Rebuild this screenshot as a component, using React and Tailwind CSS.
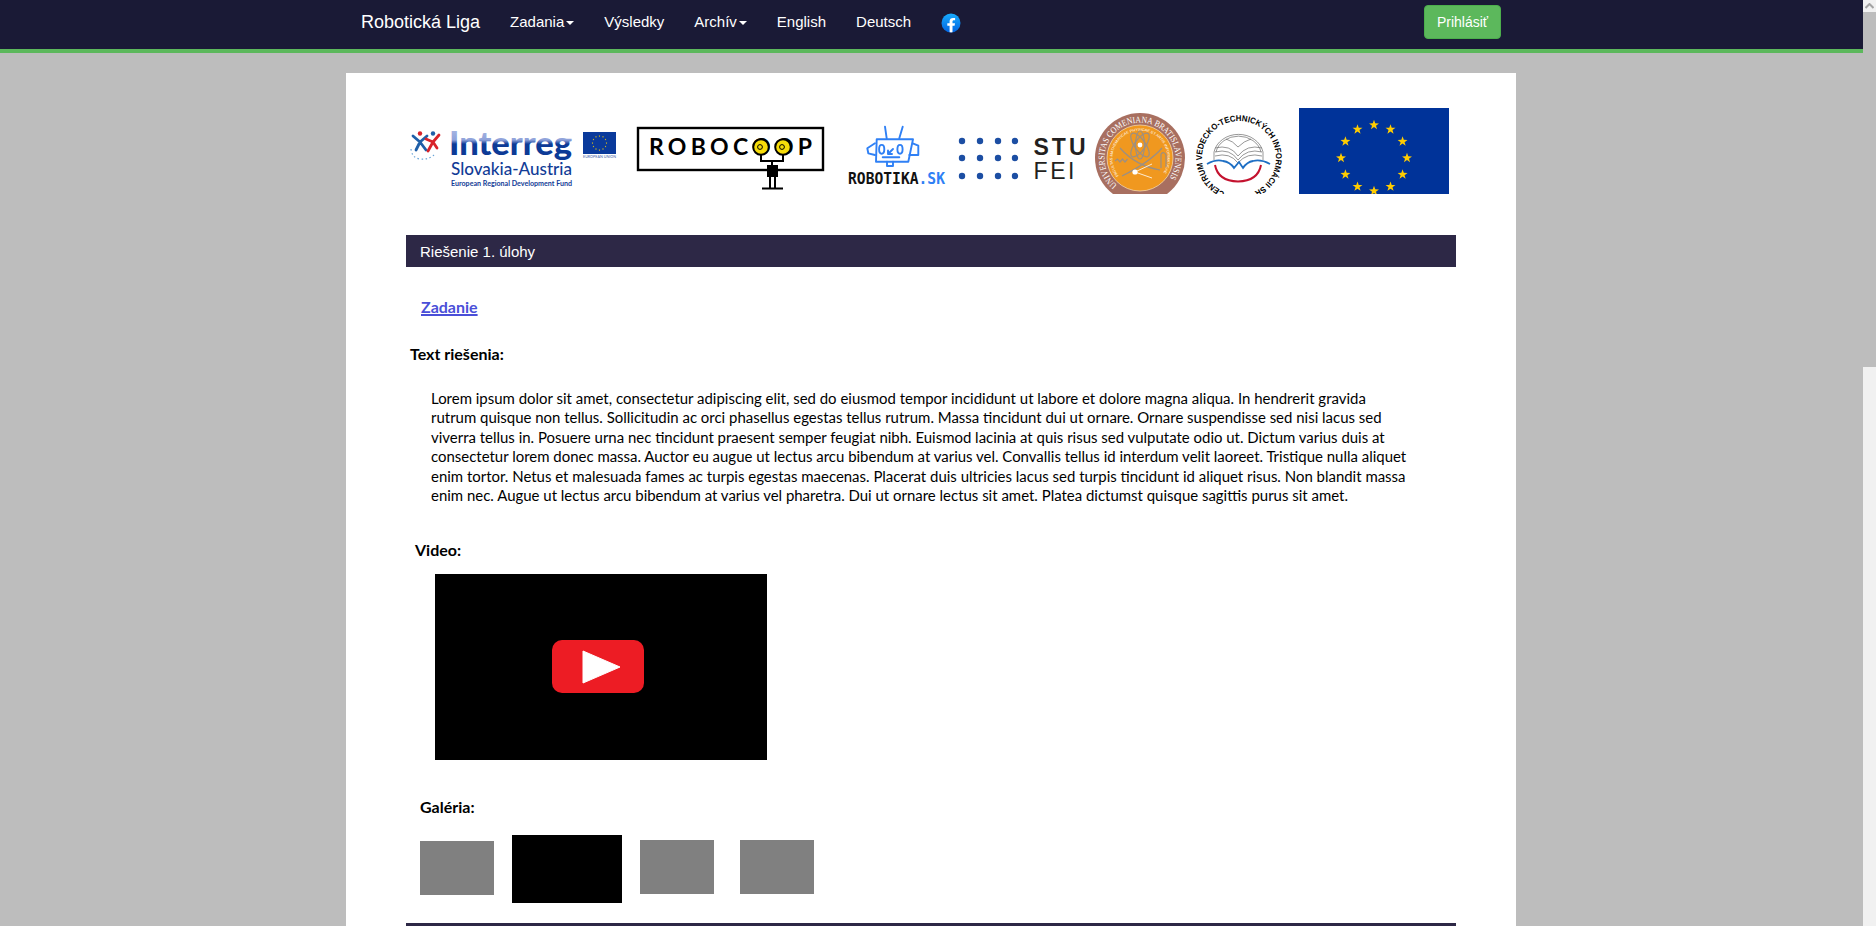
import React from "react";

function starPoints(cx, cy, r) {
  const pts = [];
  for (let i = 0; i < 10; i++) {
    const rad = i % 2 === 0 ? r : r * 0.4;
    const a = -Math.PI / 2 + (i * Math.PI) / 5;
    pts.push(`${(cx + rad * Math.cos(a)).toFixed(2)},${(cy + rad * Math.sin(a)).toFixed(2)}`);
  }
  return pts.join(" ");
}

function Stars({ cx, cy, R, r, fill }) {
  return (
    <>
      {Array.from({ length: 12 }).map((_, i) => {
        const a = (i * Math.PI) / 6;
        return <polygon key={i} points={starPoints(cx + R * Math.sin(a), cy - R * Math.cos(a), r)} fill={fill} />;
      })}
    </>
  );
}

function InterregLogo() {
  return (
    <svg width="224" height="86" viewBox="0 0 224 86" className="shrink-0">
      <defs>
        <linearGradient id="intg" x1="0" y1="0" x2="0" y2="1">
          <stop offset="0" stopColor="#b9c4e8" />
          <stop offset="0.45" stopColor="#8fa2da" />
          <stop offset="0.55" stopColor="#0d3a96" />
          <stop offset="1" stopColor="#0d3a96" />
        </linearGradient>
      </defs>
      <g fill="none" strokeWidth="2.8" strokeLinecap="round" strokeLinejoin="round">
        <path d="M7 28 L14 34 L21 28 M14 34 L10 42 M14 34 L20 42" stroke="#1f5fa8" />
        <path d="M20 31 L27 34 L33 27 M27 34 L22 43 M27 34 L31 40" stroke="#d8232a" />
      </g>
      <circle cx="14" cy="25.5" r="2.2" fill="#d8232a" />
      <circle cx="27" cy="25.5" r="2.2" fill="#1f5fa8" />
      <path d="M5 41 Q6 50 14 51 Q22 52 28 47" fill="none" stroke="#6aa5d8" strokeWidth="1.2" strokeDasharray="1.5 2.5" />
      <text x="43" y="47" fontFamily="Lato, sans-serif" fontWeight="900" fontSize="33" textLength="123" lengthAdjust="spacingAndGlyphs" fill="url(#intg)">Interreg</text>
      <text x="45" y="67" fontFamily="Lato, sans-serif" fontWeight="500" fontSize="17" textLength="121" lengthAdjust="spacingAndGlyphs" fill="#123c96">Slovakia-Austria</text>
      <text x="45" y="78" fontFamily="Lato, sans-serif" fontWeight="700" fontSize="6.6" textLength="121" lengthAdjust="spacingAndGlyphs" fill="#123c96">European Regional Development Fund</text>
      <rect x="177" y="24" width="33" height="22" fill="#0a3a9b" />
      <Stars cx={193.5} cy={35} R={7} r={1} fill="#ffd200" />
      <text x="177" y="50" fontFamily="Lato, sans-serif" fontSize="3.2" textLength="33" lengthAdjust="spacingAndGlyphs" fill="#3b5ca8">EUROPEAN UNION</text>
    </svg>
  );
}

function RobocoopLogo() {
  return (
    <svg width="200" height="86" viewBox="0 0 200 86" className="shrink-0">
      <rect x="8" y="20" width="185" height="42" fill="#fff" stroke="#000" strokeWidth="2.4" />
      <text x="19" y="47" fontFamily="Lato, sans-serif" fontWeight="700" fontSize="23" textLength="163" lengthAdjust="spacing" fill="#000">ROBOCOOP</text>
      <g fill="none" stroke="#000" strokeWidth="2">
        <path d="M131 47 V53 H142 V58 M153 47 V53 H142" />
      </g>
      <circle cx="131" cy="39" r="7.8" fill="#f6dc0a" stroke="#000" strokeWidth="2" />
      <circle cx="153" cy="39" r="7.8" fill="#f6dc0a" stroke="#000" strokeWidth="2" />
      <circle cx="130" cy="39" r="2.4" fill="none" stroke="#000" strokeWidth="1" />
      <circle cx="152" cy="39" r="2.4" fill="none" stroke="#000" strokeWidth="1" />
      <rect x="137" y="57" width="11" height="12" fill="#000" />
      <path d="M140 69 V80 M145 69 V80 M132 80.5 H153" stroke="#000" strokeWidth="2" fill="none" />
    </svg>
  );
}

function RobotikaLogo() {
  return (
    <svg width="110" height="86" viewBox="0 0 110 86" className="shrink-0">
      <g fill="none" stroke="#2f80f5" strokeWidth="1.9" strokeLinejoin="round" strokeLinecap="round">
        <path d="M45 18.7 L46.7 30.3 M62.7 18.7 L59.3 30.3" />
        <path d="M36.7 31.3 H73 L68.3 53.7 H36 Z" />
        <path d="M35 35.3 L27.3 40.3 L28.3 45.3 L35 47" />
        <path d="M72.7 35.3 L78.3 37.7 V47 L69.3 47" />
        <ellipse cx="41.7" cy="41.3" rx="2.6" ry="4.4" />
        <ellipse cx="60" cy="41.3" rx="2.6" ry="4.4" />
        <path d="M53 41 L48 46 M48 42.5 V46 H52" />
        <path d="M42.7 49.3 H59.3" />
        <path d="M47 53.7 V58 H53 V53.7" />
      </g>
      <text x="8" y="76" fontFamily="'DejaVu Sans Mono', monospace" fontWeight="700" fontSize="15" textLength="97" lengthAdjust="spacingAndGlyphs" fill="#111"><tspan>ROBOTIKA</tspan><tspan fill="#2f80f5">.SK</tspan></text>
    </svg>
  );
}

function StuLogo() {
  const xs = [7, 25, 43, 60];
  const ys = [33, 50, 68];
  return (
    <svg width="137" height="86" viewBox="0 0 137 86" className="shrink-0">
      {ys.map((y) => xs.map((x) => <circle key={`${x}-${y}`} cx={x} cy={y} r="3.2" fill="#1c4ea3" />))}
      <text x="78.5" y="47" fontFamily="'Liberation Sans', sans-serif" fontWeight="700" fontSize="23" textLength="52" lengthAdjust="spacing" fill="#231f20">STU</text>
      <text x="78.5" y="71" fontFamily="'Liberation Sans', sans-serif" fontSize="23" textLength="41" lengthAdjust="spacing" fill="#231f20">FEI</text>
    </svg>
  );
}

function ComeniusLogo() {
  return (
    <svg width="98" height="86" viewBox="0 0 98 86" className="shrink-0">
      <defs>
        <path id="cu-outer" d="M 25.2 77.2 A 35.5 35.5 0 1 1 77.1 70.4" />
        <path id="cu-inner" d="M 26.8 67.7 A 27.5 27.5 0 1 1 69.2 67.7" />
      </defs>
      <circle cx="48" cy="50" r="45" fill="#a86f60" />
      <circle cx="48" cy="50" r="33" fill="#f0981f" stroke="#f8e0b8" strokeWidth="0.7" />
      <text fontFamily="'Liberation Serif', serif" fontSize="9" fill="#fff"><textPath href="#cu-outer" textLength="163" lengthAdjust="spacingAndGlyphs">UNIVERSITAS COMENIANA BRATISLAVENSIS</textPath></text>
      <text fontFamily="'Liberation Sans', sans-serif" fontSize="3.6" fill="#fff"><textPath href="#cu-inner" textLength="120" lengthAdjust="spacingAndGlyphs">FACULTAS MATHEMATICAE PHYSICAE ET ARTIS INFORMATICAE</textPath></text>
      <g fill="none" stroke="#9a8f85" strokeWidth="1.2">
        <ellipse cx="48" cy="37" rx="5.5" ry="14" transform="rotate(-35 48 37)" />
        <ellipse cx="48" cy="37" rx="5.5" ry="14" transform="rotate(35 48 37)" />
        <ellipse cx="48" cy="37" rx="4.5" ry="14" />
        <path d="M28 40 Q44 58 68 62 M70 40 Q58 54 30 68 M23 53 l2.5 -2 l2.5 3 l2.5 -3 l2.5 3 l2.5 -3" />
        <path d="M69 46 V60 M74 47 V59 M69 46 Q72 43 74 47" />
      </g>
      <circle cx="48" cy="37" r="2.4" fill="#fff" />
      <circle cx="43" cy="64" r="2.6" fill="#fff" />
      <path d="M43 64 L60 56 M43 64 L60 70" stroke="#fff" strokeWidth="0.8" fill="none" />
    </svg>
  );
}

function VedeckoLogo() {
  return (
    <svg width="109" height="86" viewBox="0 0 109 86" className="shrink-0">
      <defs>
        <path id="ve-ring" d="M 35.1 84.3 A 37 37 0 1 1 62.9 84.3" />
      </defs>
      <text fontFamily="'Liberation Sans', sans-serif" fontWeight="700" fontSize="8.4" fill="#000"><textPath href="#ve-ring" textLength="202" lengthAdjust="spacingAndGlyphs">CENTRUM VEDECKO-TECHNICKÝCH INFORMÁCII SR</textPath></text>
      <g fill="none" stroke="#6b6b6b" strokeWidth="0.7">
        <path d="M24 52 V44 A25 22 0 0 1 73 44 V52" />
        <path d="M26 44 A23 20 0 0 1 71 44" />
        <path d="M25 40 Q40 36 48 48 Q57 36 72 40" />
        <path d="M25 44 Q40 40 48 52 Q57 40 72 44" />
        <path d="M25 48 Q40 44 48 55 Q57 44 72 48" />
        <path d="M36 31 Q43 33 48 39 Q54 33 61 31" />
      </g>
      <path d="M17 56 Q26 51 33 53 Q40 54 44 60 L49 54 L53 60 Q57 54 63 53 Q71 51 80 56" fill="none" stroke="#1e6fc4" strokeWidth="1.8" />
      <path d="M25 57 Q28 73 48 73.5 Q68 73 71 57" fill="none" stroke="#c4122f" strokeWidth="2" />
    </svg>
  );
}

function EuFlag() {
  return (
    <svg width="150" height="86" viewBox="0 0 150 86" className="shrink-0">
      <rect width="150" height="86" fill="#003399" />
      <Stars cx={75} cy={50} R={33} r={5.2} fill="#ffcc00" />
    </svg>
  );
}

function Caret() {
  return <span className="inline-block ml-[2px] align-middle w-0 h-0 border-x-4 border-x-transparent border-t-4 border-t-white" />;
}

function NavLink({ children, caret }) {
  return (
    <a className="px-[15px] text-white text-[15px] leading-[20px] whitespace-nowrap">
      {children}
      {caret && <Caret />}
    </a>
  );
}

const labelFont = "font-['Lato','Carlito',sans-serif]";

export default function App() {
  return (
    <div className="flex h-[926px] overflow-hidden bg-[#bdbdbd] font-['Liberation_Sans',Arial,sans-serif]">
      <div className="flex-1 min-w-0 flex flex-col">
        <nav className="h-[53px] shrink-0 bg-[#1a1a36] border-b-4 border-[#5cb85c]">
          <div className="w-[1170px] ml-[346px] h-[44px] flex items-center justify-between pr-[15px]">
            <div className="flex items-center">
              <a className="pl-[15px] pr-[15px] text-white text-[18px] whitespace-nowrap">Robotická Liga</a>
              <NavLink caret>Zadania</NavLink>
              <NavLink>Výsledky</NavLink>
              <NavLink caret>Archív</NavLink>
              <NavLink>English</NavLink>
              <NavLink>Deutsch</NavLink>
              <svg width="20" height="20" viewBox="0 0 20 20" className="ml-[15px] mt-[1px]">
                <defs>
                  <linearGradient id="fbg" x1="0" y1="0" x2="0" y2="1">
                    <stop offset="0" stopColor="#18acfe" />
                    <stop offset="1" stopColor="#0163e0" />
                  </linearGradient>
                </defs>
                <circle cx="10" cy="10" r="9.5" fill="url(#fbg)" />
                <path d="M13.6 12.7 L14 10.2 H11.5 V8.6 C11.5 7.9 11.85 7.3 12.9 7.3 H14.1 V5.1 C14.1 5.1 13 4.9 12 4.9 C9.9 4.9 8.6 6.1 8.6 8.3 V10.2 H6.3 V12.7 H8.6 V19.3 C9.5 19.5 10.6 19.5 11.5 19.3 V12.7 Z" fill="#fff" />
              </svg>
            </div>
            <button className="w-[77px] h-[34px] bg-[#5cb85c] border border-[#4cae4c] rounded-[4px] text-white text-[14px] whitespace-nowrap">Prihlásiť</button>
          </div>
        </nav>

        <main className="w-[1170px] ml-[346px] flex-1 min-h-0 mt-[20px] bg-white px-[60px] pt-[35px] overflow-hidden">
          <div className="flex h-[86px]">
            <InterregLogo />
            <RobocoopLogo />
            <div className="w-[10px] shrink-0" />
            <RobotikaLogo />
            <div className="w-[5px] shrink-0" />
            <StuLogo />
            <ComeniusLogo />
            <VedeckoLogo />
            <EuFlag />
          </div>

          <div className="mt-[41px] h-[32px] bg-[#2d2846] text-white text-[15px] leading-[33px] px-[14px]">Riešenie 1. úlohy</div>

          <div className={labelFont}>
            <a className="block mt-[30px] ml-[15px] text-[#4a4fd8] text-[16px] leading-[20px] font-bold underline decoration-2">Zadanie</a>
            <h3 className="mt-[27px] ml-[4px] text-black text-[16px] leading-[20px] font-bold">Text riešenia:</h3>
            <p className="mt-[25px] ml-[25px] text-black text-[14.96px] leading-[19.4px] whitespace-nowrap">
              Lorem ipsum dolor sit amet, consectetur adipiscing elit, sed do eiusmod tempor incididunt ut labore et dolore magna aliqua. In hendrerit gravida<br />
              rutrum quisque non tellus. Sollicitudin ac orci phasellus egestas tellus rutrum. Massa tincidunt dui ut ornare. Ornare suspendisse sed nisi lacus sed<br />
              viverra tellus in. Posuere urna nec tincidunt praesent semper feugiat nibh. Euismod lacinia at quis risus sed vulputate odio ut. Dictum varius duis at<br />
              consectetur lorem donec massa. Auctor eu augue ut lectus arcu bibendum at varius vel. Convallis tellus id interdum velit laoreet. Tristique nulla aliquet<br />
              enim tortor. Netus et malesuada fames ac turpis egestas maecenas. Placerat duis ultricies lacus sed turpis tincidunt id aliquet risus. Non blandit massa<br />
              enim nec. Augue ut lectus arcu bibendum at varius vel pharetra. Dui ut ornare lectus sit amet. Platea dictumst quisque sagittis purus sit amet.
            </p>
            <h3 className="mt-[35px] ml-[9px] text-black text-[16px] leading-[20px] font-bold">Video:</h3>
            <div className="mt-[14px] ml-[29px] w-[332px] h-[186px] bg-black flex items-center justify-center">
              <svg width="92" height="53" viewBox="0 0 92 53" className="mr-[6px] mb-[1px]">
                <rect width="92" height="53" rx="10" fill="#ed1c24" />
                <path d="M31 11 L68 27 L31 43 Z" fill="#fff" stroke="#fff" strokeLinejoin="round" />
              </svg>
            </div>
            <h3 className="mt-[37px] ml-[14px] text-black text-[16px] leading-[20px] font-bold">Galéria:</h3>
            <div className="mt-[18px] ml-[14px] flex items-start h-[70px]">
              <div className="w-[74px] h-[54px] mt-[6px] bg-[#808080]" />
              <div className="w-[110px] h-[68px] ml-[18px] bg-black" />
              <div className="w-[74px] h-[54px] mt-[5px] ml-[18px] bg-[#808080]" />
              <div className="w-[74px] h-[54px] mt-[5px] ml-[26px] bg-[#808080]" />
            </div>
            <div className="mt-[18px] h-[4px] bg-[#2d2846]" />
          </div>
        </main>
      </div>

      <aside className="w-[13px] shrink-0 flex flex-col">
        <div className="h-[12px] bg-[#f1f1f1] flex items-center justify-center">
          <svg width="9" height="6" viewBox="0 0 9 6"><path d="M0.5 5 L4.5 1 L8.5 5" fill="none" stroke="#a3a3a3" strokeWidth="2" /></svg>
        </div>
        <div className="h-[355px] bg-[#bdbdbd]" />
        <div className="flex-1 bg-[#f1f1f1]" />
      </aside>
    </div>
  );
}
